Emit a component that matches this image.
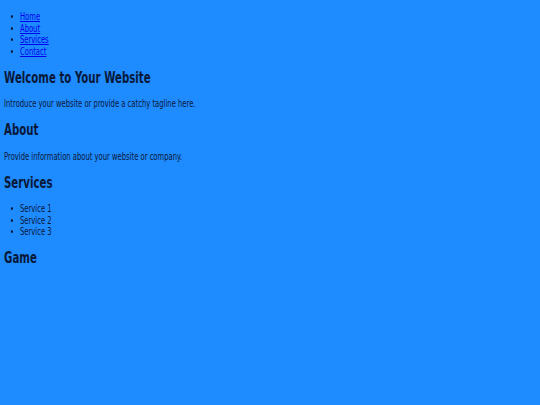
const navLinks = ['Home', 'About', 'Services', 'Contact'];
const services = ['Service 1', 'Service 2', 'Service 3'];

function Heading({ children }: { children: React.ReactNode }) {
  return <h2 className="text-[15px] font-bold leading-[17.5px] mt-[12.5px] mb-[11px]">{children}</h2>;
}

export default function App() {
  return (
    <div className="min-h-[405px] overflow-hidden bg-[#1e8bff]">
      {/* narrow page body: type is set at 10px and squeezed sideways */}
      <div className="w-[794px] origin-top-left scale-x-[0.68] px-[5.9px] py-[11px] text-[10px] leading-[11.5px] text-[#0a1838] font-['DejaVu_Sans',sans-serif]">
        <nav>
          <ul className="list-disc pl-[23.5px]">
            {navLinks.map(link => (
              <li key={link}>
                <a href="#" className="text-[#0000ee] underline">{link}</a>
              </li>
            ))}
          </ul>
        </nav>

        <section>
          <Heading>Welcome to Your Website</Heading>
          <p>Introduce your website or provide a catchy tagline here.</p>
        </section>

        <section>
          <Heading>About</Heading>
          <p>Provide information about your website or company.</p>
        </section>

        <section>
          <Heading>Services</Heading>
          <ul className="list-disc pl-[23.5px]">
            {services.map(s => (
              <li key={s}>{s}</li>
            ))}
          </ul>
        </section>

        <section>
          <Heading>Game</Heading>
        </section>
      </div>
    </div>
  );
}
